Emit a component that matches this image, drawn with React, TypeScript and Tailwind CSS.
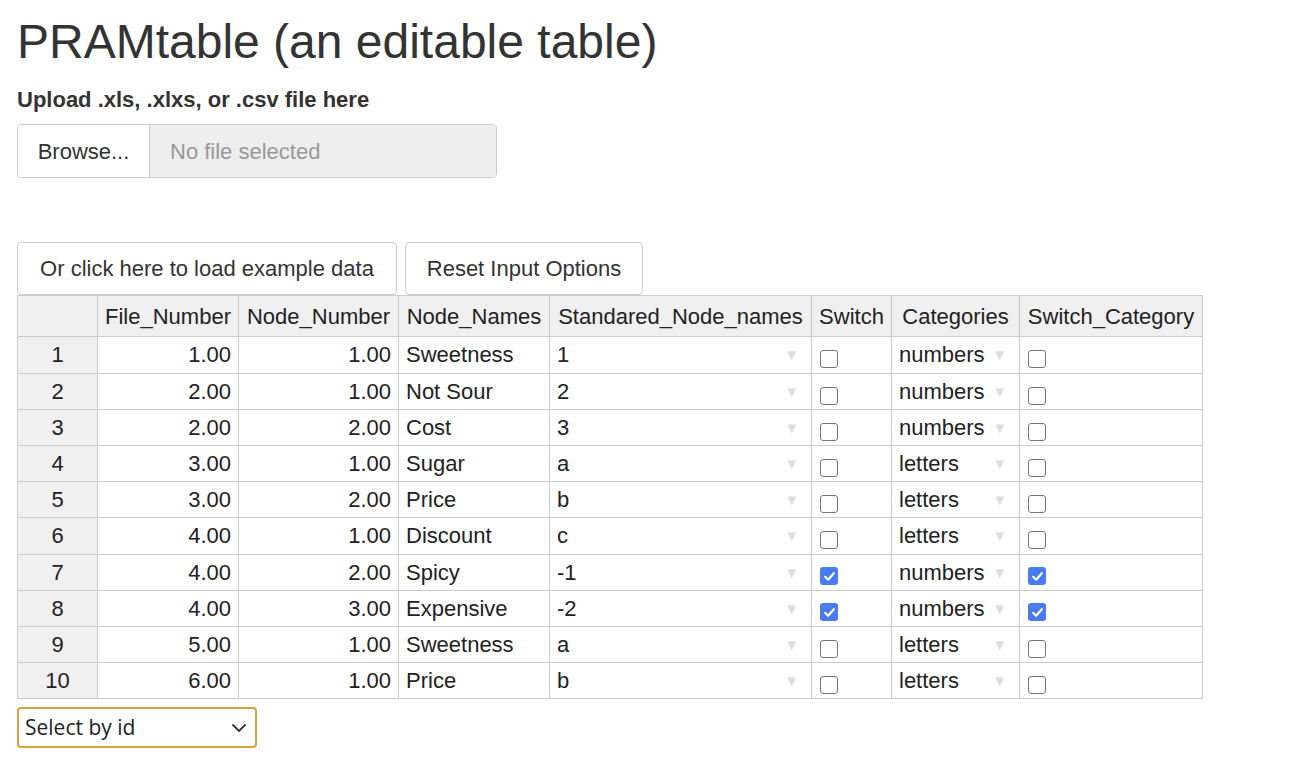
import React from "react";

type Row = {
  file: string;
  node: string;
  name: string;
  std: string;
  sw: boolean;
  cat: string;
  swCat: boolean;
};

const rows: Row[] = [
  { file: "1.00", node: "1.00", name: "Sweetness", std: "1", sw: false, cat: "numbers", swCat: false },
  { file: "2.00", node: "1.00", name: "Not Sour", std: "2", sw: false, cat: "numbers", swCat: false },
  { file: "2.00", node: "2.00", name: "Cost", std: "3", sw: false, cat: "numbers", swCat: false },
  { file: "3.00", node: "1.00", name: "Sugar", std: "a", sw: false, cat: "letters", swCat: false },
  { file: "3.00", node: "2.00", name: "Price", std: "b", sw: false, cat: "letters", swCat: false },
  { file: "4.00", node: "1.00", name: "Discount", std: "c", sw: false, cat: "letters", swCat: false },
  { file: "4.00", node: "2.00", name: "Spicy", std: "-1", sw: true, cat: "numbers", swCat: true },
  { file: "4.00", node: "3.00", name: "Expensive", std: "-2", sw: true, cat: "numbers", swCat: true },
  { file: "5.00", node: "1.00", name: "Sweetness", std: "a", sw: false, cat: "letters", swCat: false },
  { file: "6.00", node: "1.00", name: "Price", std: "b", sw: false, cat: "letters", swCat: false },
];

const rowHeights = ["h-[37px]", "h-[36px]", "h-[36px]", "h-[36px]", "h-[36px]", "h-[37px]", "h-[36px]", "h-[36px]", "h-[36px]", "h-[36px]"];

const headers = ["File_Number", "Node_Number", "Node_Names", "Standared_Node_names", "Switch", "Categories", "Switch_Category"];

const Arrow = () => (
  <span className="absolute right-[12px] top-[10px] text-[15px] leading-none text-[#dddddd]">▼</span>
);

const Check = ({ on }: { on: boolean }) =>
  on ? (
    <span className="mt-[12px] flex h-[18px] w-[18px] items-center justify-center rounded-[3px] bg-[#4a7bf0]">
      <svg width="13" height="13" viewBox="0 0 12 12" fill="none">
        <path d="M2 6.3 L4.8 9 L10 3" stroke="white" strokeWidth="2" strokeLinecap="round" strokeLinejoin="round" />
      </svg>
    </span>
  ) : (
    <span className="mt-[13px] block h-[18px] w-[18px] rounded-[3px] border-[1.5px] border-[#767676] bg-white" />
  );

const cell = "relative border-r border-b border-[#cccccc] px-[7px] overflow-hidden whitespace-nowrap";

export default function App() {
  return (
    <div className="min-h-screen bg-white pl-[17px] pt-[14px] text-[#333333] [font-family:'Liberation_Sans',Arial,sans-serif]">
      <h1 className="text-[48px] leading-[1.15] font-normal">PRAMtable (an editable table)</h1>

      <div className="mt-[20px] text-[22px] font-bold leading-[22px]">Upload .xls, .xlxs, or .csv file here</div>

      <div className="mt-[13px] flex h-[54px] w-[480px] overflow-hidden rounded-[4px] border border-[#cccccc] text-[22px]">
        <div className="flex w-[132px] items-center justify-center border-r border-[#cccccc] bg-white">Browse...</div>
        <div className="flex flex-1 items-center bg-[#eeeeee] px-[20px] text-[#999999]">No file selected</div>
      </div>

      <div className="mt-[64px] flex gap-[8px] text-[22px]">
        <button className="h-[53px] w-[380px] rounded-[4px] border border-[#cccccc] bg-white">Or click here to load example data</button>
        <button className="h-[53px] w-[238px] rounded-[4px] border border-[#cccccc] bg-white">Reset Input Options</button>
      </div>

      <div className="w-[1186px] border-l border-t border-[#cccccc] text-[22px] text-[#222222]">
        <div className="grid h-[41px] grid-cols-[80px_141px_160px_151px_262px_80px_128px_183px] bg-[#f0f0f0]">
          <div className={cell} />
          {headers.map((h) => (
            <div key={h} className={`${cell} flex items-center justify-center`}>
              {h}
            </div>
          ))}
        </div>
        {rows.map((r, i) => (
          <div key={i} className={`grid ${rowHeights[i]} grid-cols-[80px_141px_160px_151px_262px_80px_128px_183px] leading-[36px]`}>
            <div className={`${cell} bg-[#f0f0f0] text-center`}>{i + 1}</div>
            <div className={`${cell} text-right`}>{r.file}</div>
            <div className={`${cell} text-right`}>{r.node}</div>
            <div className={cell}>{r.name}</div>
            <div className={cell}>
              {r.std}
              <Arrow />
            </div>
            <div className={`${cell} pl-[8px]`}>
              <Check on={r.sw} />
            </div>
            <div className={cell}>
              {r.cat}
              <Arrow />
            </div>
            <div className={`${cell} pl-[8px]`}>
              <Check on={r.swCat} />
            </div>
          </div>
        ))}
      </div>

      <div className="mt-[8px] flex h-[41px] w-[240px] items-center justify-between rounded-[4px] border-2 border-[#d9a03f] bg-white pl-[6px] pr-[8px] text-[21px] text-[#222222] [font-family:'Open_Sans',sans-serif]">
        <span>Select by id</span>
        <svg width="16" height="10" viewBox="0 0 16 10" fill="none">
          <path d="M1.5 1.5 L8 8 L14.5 1.5" stroke="#333" strokeWidth="1.8" />
        </svg>
      </div>
    </div>
  );
}
